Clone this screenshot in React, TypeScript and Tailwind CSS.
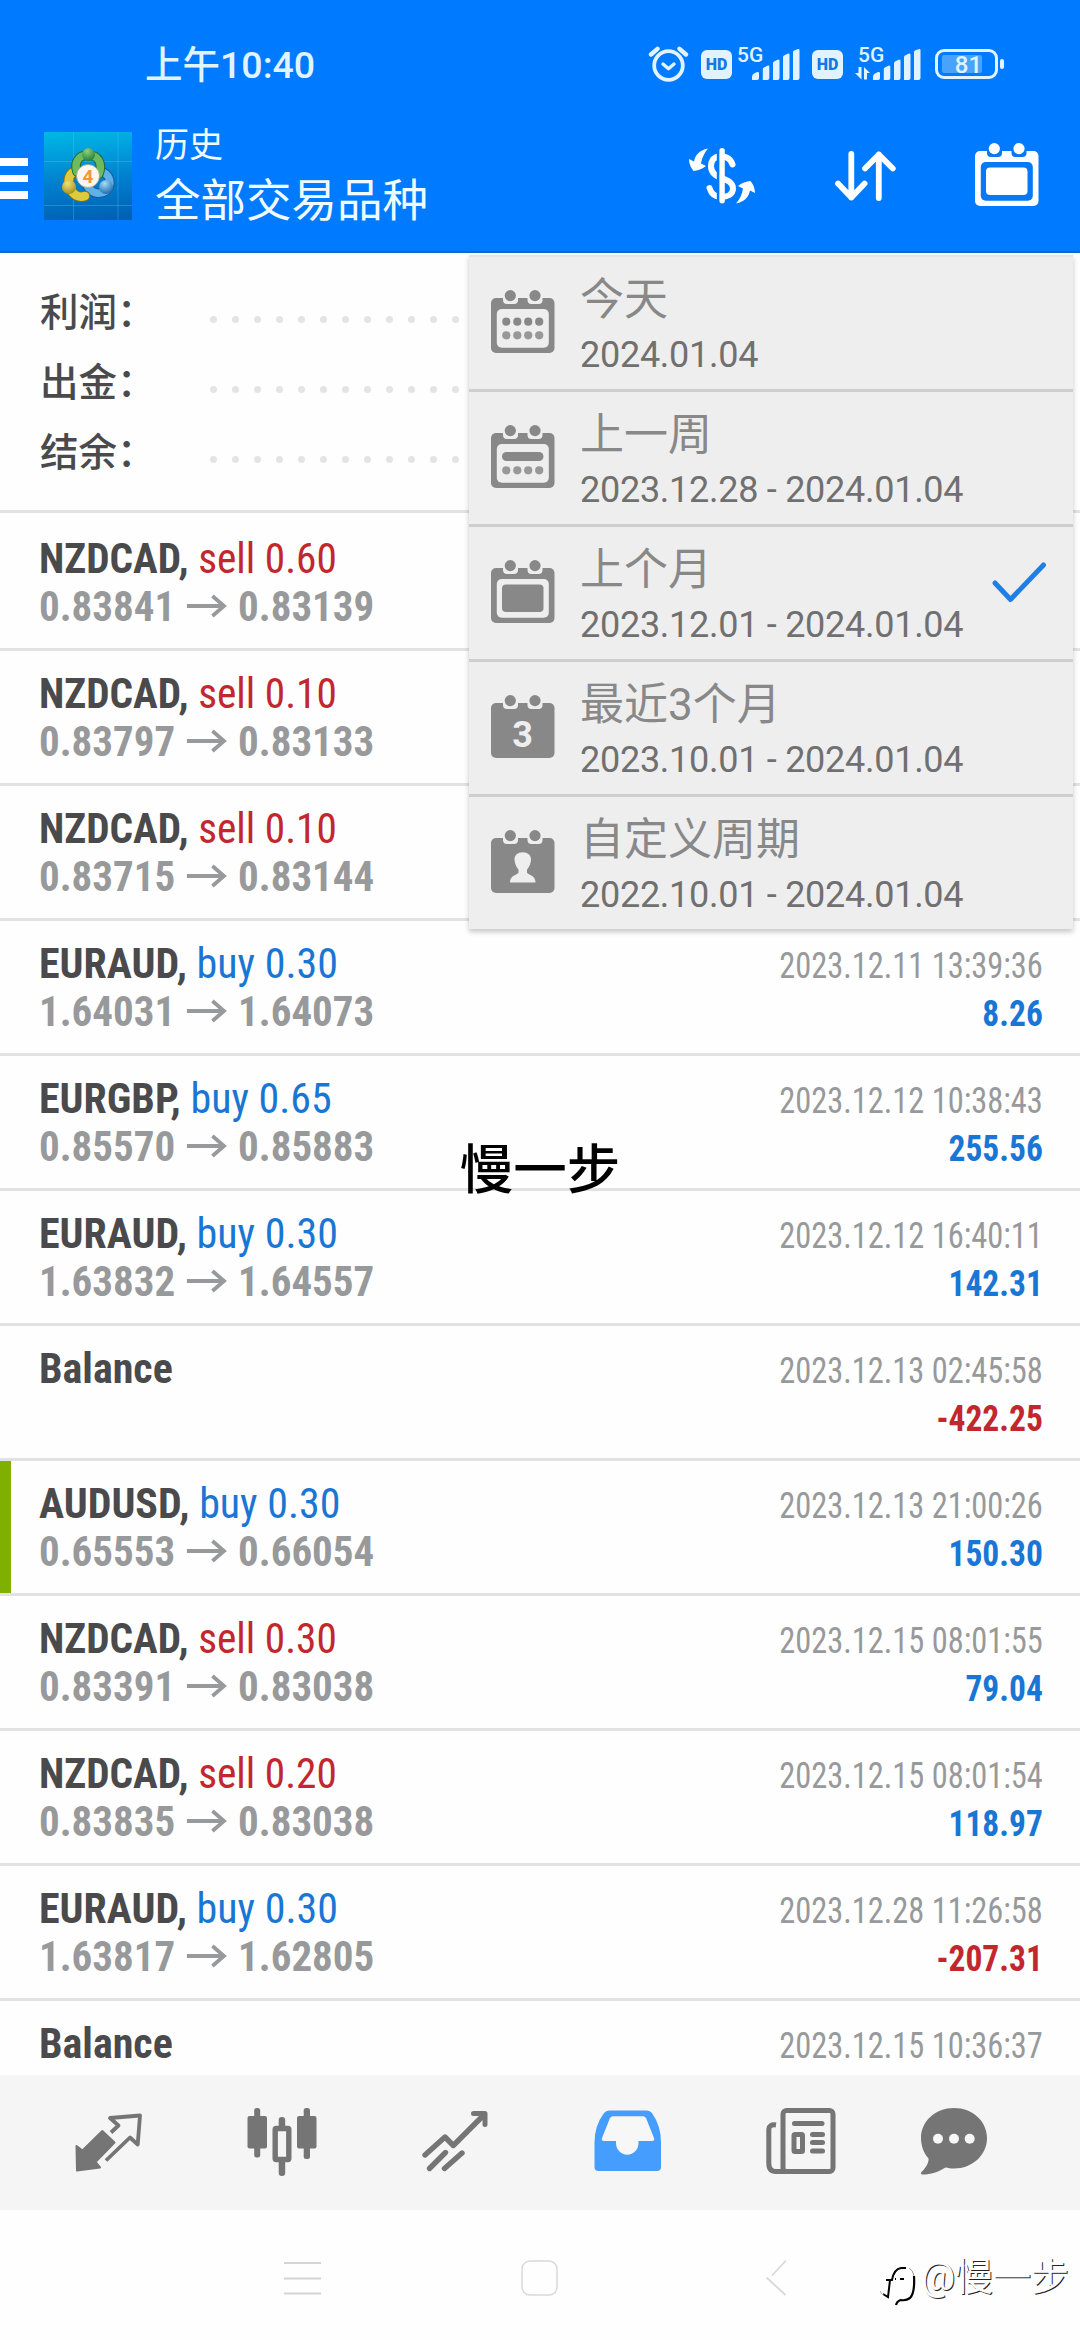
import React from "react";

type Trade = {
  symbol: string;
  side?: "buy" | "sell";
  lots?: string;
  open?: string;
  close?: string;
  time: string;
  profit: string;
  marked?: boolean;
};

const trades: Trade[] = [
  { symbol: "NZDCAD", side: "sell", lots: "0.60", open: "0.83841", close: "0.83139", time: "", profit: "" },
  { symbol: "NZDCAD", side: "sell", lots: "0.10", open: "0.83797", close: "0.83133", time: "", profit: "" },
  { symbol: "NZDCAD", side: "sell", lots: "0.10", open: "0.83715", close: "0.83144", time: "", profit: "" },
  { symbol: "EURAUD", side: "buy", lots: "0.30", open: "1.64031", close: "1.64073", time: "2023.12.11 13:39:36", profit: "8.26" },
  { symbol: "EURGBP", side: "buy", lots: "0.65", open: "0.85570", close: "0.85883", time: "2023.12.12 10:38:43", profit: "255.56" },
  { symbol: "EURAUD", side: "buy", lots: "0.30", open: "1.63832", close: "1.64557", time: "2023.12.12 16:40:11", profit: "142.31" },
  { symbol: "Balance", time: "2023.12.13 02:45:58", profit: "-422.25" },
  { symbol: "AUDUSD", side: "buy", lots: "0.30", open: "0.65553", close: "0.66054", time: "2023.12.13 21:00:26", profit: "150.30", marked: true },
  { symbol: "NZDCAD", side: "sell", lots: "0.30", open: "0.83391", close: "0.83038", time: "2023.12.15 08:01:55", profit: "79.04" },
  { symbol: "NZDCAD", side: "sell", lots: "0.20", open: "0.83835", close: "0.83038", time: "2023.12.15 08:01:54", profit: "118.97" },
  { symbol: "EURAUD", side: "buy", lots: "0.30", open: "1.63817", close: "1.62805", time: "2023.12.28 11:26:58", profit: "-207.31" },
  { symbol: "Balance", time: "2023.12.15 10:36:37", profit: "" },
];

type CalendarKind = "day" | "week" | "month" | "quarter" | "custom";

const periods: { kind: CalendarKind; title: string; range: string; checked?: boolean }[] = [
  { kind: "day", title: "今天", range: "2024.01.04" },
  { kind: "week", title: "上一周", range: "2023.12.28 - 2024.01.04" },
  { kind: "month", title: "上个月", range: "2023.12.01 - 2024.01.04", checked: true },
  { kind: "quarter", title: "最近3个月", range: "2023.10.01 - 2024.01.04" },
  { kind: "custom", title: "自定义周期", range: "2022.10.01 - 2024.01.04" },
];

const dotColumns = [15.3, 26.3, 37.2, 48.2];

const CalendarIcon = ({ kind, color, bg }: { kind: CalendarKind; color: string; bg: string }) => (
  <svg width="64" height="63" viewBox="0 0 64 63" fill={color} className="shrink-0">
    <rect x="0" y="8" width="63.5" height="55" rx="5" />
    <path d="M12 7v3q0 4 4 4h7q4 0 4-4V7zM36.5 7v3q0 4 4 4h7q4 0 4-4V7z" fill={bg} />
    <circle cx="19.3" cy="5.6" r="5.6" />
    <circle cx="44" cy="5.6" r="5.6" />
    {(kind === "day" || kind === "week" || kind === "month") && (
      <rect x="5.8" y="19" width="52" height="38.7" rx="5" fill={bg} />
    )}
    {kind === "day" && dotColumns.map((x) => <circle key={x} cx={x} cy="31.7" r="4.1" />)}
    {kind === "week" && <rect x="11" y="27" width="41.5" height="9" rx="4.5" />}
    {(kind === "day" || kind === "week") &&
      dotColumns.map((x) => <circle key={x} cx={x} cy="45.3" r="4.1" opacity="0.85" />)}
    {kind === "month" && <rect x="11" y="24.5" width="41.5" height="27.5" rx="4" />}
    {kind === "quarter" && (
      <text x="31.7" y="51.5" fontSize="36" fontWeight="700" fontFamily="Roboto, sans-serif" textAnchor="middle" fill={bg}>
        3
      </text>
    )}
    {kind === "custom" && (
      <path
        d="M31.7 22.3c5 0 8.3 3 8.3 7 0 4-1.5 7-4 10.5v3c1.5 2.2 8.5 2.5 8.5 9.7h-25.5c0-7.2 7-7.5 8.5-9.7v-3c-2.5-3.5-4-6.5-4-10.5 0-4 3.2-7 8.2-7z"
        fill={bg}
      />
    )}
  </svg>
);

const SignalBars = () => (
  <svg width="48" height="31" viewBox="0 0 48 31" fill="#e0f3ff">
    <path d="M0 31v-3q0-3 3-4l2-1q2-.5 2 1v5q0 2-2 2z" />
    <path d="M10.8 31V20q0-1 1-1.5l3.5-1.8q2-.5 2 1V29q0 2-2 2z" />
    <path d="M21 31V14q0-1 1-1.5l3.5-1.8q2-.5 2 1V29q0 2-2 2z" />
    <path d="M31 31V8q0-1 1-1.5l3.5-1.8q2-.5 2 1V29q0 2-2 2z" />
    <path d="M41 31V3q0-1 1-1.5L45.5.2q2-.5 2 1V29q0 2-2 2z" />
  </svg>
);

const HdBadge = () => (
  <div className="flex h-[29px] w-[31px] items-center justify-center rounded-[6px] bg-[#e0f3ff] text-[16px] font-black leading-none text-[#1478e6]">
    HD
  </div>
);

const StatusBar = () => (
  <div className="relative h-[112px] text-[#e0f3ff]">
    <div className="absolute left-[145px] top-[40px] text-[37.5px] font-medium leading-[50px]">上午10:40</div>
    <svg className="absolute left-[648px] top-[45px]" width="41" height="38" viewBox="0 0 41 38" fill="none" stroke="#e0f3ff" strokeLinecap="round">
      <circle cx="20.5" cy="20.5" r="14.3" strokeWidth="3.8" />
      <path d="M3 9.5L9.5 3.8M31.5 3.8L38 9.5" strokeWidth="4.4" />
      <path d="M15 19l5.5 4.7L26 19" strokeWidth="3.4" strokeLinejoin="round" />
    </svg>
    <div className="absolute left-[701px] top-[50px]"><HdBadge /></div>
    <div className="absolute left-[737px] top-[43px] text-[21px] font-medium leading-[25px]">5G</div>
    <div className="absolute left-[752px] top-[49px]"><SignalBars /></div>
    <div className="absolute left-[812px] top-[50px]"><HdBadge /></div>
    <div className="absolute left-[858px] top-[43px] text-[21px] font-medium leading-[25px]">5G</div>
    <svg className="absolute left-[855px] top-[67px]" width="16" height="13" viewBox="0 0 16 13" fill="#e0f3ff">
      <path d="M3.5 0h3v12.5L0 6h3.5zM9 12.5V0l6 6h-3v6.5z" />
    </svg>
    <div className="absolute left-[873px] top-[49px]"><SignalBars /></div>
    <div className="absolute left-[935px] top-[49px] h-[30px] w-[63px] rounded-[9px] border-[3px] border-[#e0f3ff]">
      <div className="absolute left-[4px] top-[3px] h-[18px] w-[40px] rounded-[2px] bg-[#4aa3fb]" />
      <div className="absolute inset-0 pl-[4px] text-center text-[24px] font-medium leading-[26px]">81</div>
    </div>
    <div className="absolute left-[1000px] top-[59px] h-[10px] w-[4px] rounded-[2px] bg-[#e0f3ff]" />
  </div>
);

const AppLogo = () => (
  <svg width="88" height="88" viewBox="44 132 88 88" className="shrink-0">
    <defs>
      <linearGradient id="tile" x1="0.5" y1="0" x2="0.6" y2="1">
        <stop offset="0" stopColor="#00b4e4" />
        <stop offset="0.55" stopColor="#007fcf" />
        <stop offset="1" stopColor="#0061b4" />
      </linearGradient>
      <radialGradient id="green" cx="0.4" cy="0.25" r="0.8">
        <stop offset="0" stopColor="#8fd07c" />
        <stop offset="1" stopColor="#1f7a35" />
      </radialGradient>
      <radialGradient id="gold" cx="0.4" cy="0.25" r="0.8">
        <stop offset="0" stopColor="#efe27a" />
        <stop offset="1" stopColor="#a38a14" />
      </radialGradient>
      <radialGradient id="azure" cx="0.4" cy="0.25" r="0.8">
        <stop offset="0" stopColor="#a9dcf8" />
        <stop offset="1" stopColor="#1667ad" />
      </radialGradient>
    </defs>
    <rect x="44" y="132" width="88" height="88" fill="url(#tile)" />
    <path d="M73.5 132v88M118 132v88M44 161.5h88M44 205.5h88" stroke="#5cc3ee" strokeOpacity="0.35" />
    <g fill="none" strokeLinecap="round">
      <path d="M103 172c8 4 9 14 3 19-8 5-17 1-20-8" stroke="#1a5c98" strokeWidth="9.5" />
      <path d="M103 172c8 4 9 14 3 19-8 5-17 1-20-8" stroke="#5db2e8" strokeWidth="7.5" />
      <path d="M77 172c-8-1-10 9-7 16 3 7 9 10 15 8" stroke="#7a711c" strokeWidth="10.5" />
      <path d="M77 172c-8-1-10 9-7 16 3 7 9 10 15 8" stroke="#dccb3f" strokeWidth="8.5" />
      <path d="M77 172c-3-9 1-17 11-17s15 8 11 19" stroke="#226b33" strokeWidth="9.5" />
      <path d="M77 172c-3-9 1-17 11-17s15 8 11 19" stroke="#6dbb5e" strokeWidth="7.5" />
    </g>
    <circle cx="88.5" cy="154.5" r="6.5" fill="url(#green)" />
    <circle cx="69" cy="187" r="7" fill="url(#gold)" />
    <circle cx="106" cy="187" r="7" fill="url(#azure)" />
    <circle cx="88" cy="176" r="11.5" fill="#fbf6ef" stroke="#a99c83" strokeWidth="0.8" />
    <text x="88" y="182.5" fontSize="19" fontWeight="700" fontFamily="Roboto, sans-serif" textAnchor="middle" fill="#f3963a">
      4
    </text>
  </svg>
);

const Header = () => (
  <header className="h-[253px] shrink-0 border-b-2 border-[#1268c4] bg-[#007aff] text-white">
    <StatusBar />
    <div className="flex h-[128px] items-start">
      <div className="mt-[46px] flex w-[28px] flex-col gap-[9px]">
        <div className="h-[7.5px] bg-white" />
        <div className="h-[7.5px] bg-white" />
        <div className="h-[7.5px] bg-white" />
      </div>
      <div className="ml-4 mt-[20px]">
        <AppLogo />
      </div>
      <div className="ml-[23px] mt-[11px] grow text-[#f0fbff]">
        <div className="text-[34px] leading-[44px]">历史</div>
        <div className="mt-[7px] text-[45.5px] leading-[56px]">全部交易品种</div>
      </div>
      <svg className="mt-[35px]" width="68" height="58" viewBox="688 147 68 58" fill="#fff">
        <path
          d="M732.5 164.5C730 157 725 156.5 720 156.5c-7 0-9 5-9 9.8 0 7 5 10 11 12 7 2 11 4.5 11 10.2 0 6-6 8.5-12 8.5-7 0-10-4-11.5-9"
          fill="none"
          stroke="#fff"
          strokeWidth="6"
          strokeLinecap="round"
        />
        <rect x="716.8" y="148" width="3" height="56" fill="#007aff" />
        <rect x="719.4" y="148" width="5.4" height="55.5" rx="2.7" />
        <path d="M708 148.5C699 150 695 156 694 161.5l-5-2.5c0 5 2 9 4.5 12 4-.5 9-2 12.5-5l-5-2.5c1-6 3-10 7-15z" />
        <path d="M708 148.5C699 150 695 156 694 161.5l-5-2.5c0 5 2 9 4.5 12 4-.5 9-2 12.5-5l-5-2.5c1-6 3-10 7-15z" transform="rotate(180 722 176)" />
      </svg>
      <svg
        className="ml-[78px] mt-[38px]"
        width="63"
        height="53"
        viewBox="834 150 63 53"
        fill="none"
        stroke="#fff"
        strokeWidth="5.8"
        strokeLinecap="round"
        strokeLinejoin="round"
      >
        <path d="M851.3 154v43.5M838 183.5l13.3 14 13.3-14M878.8 198v-43.5M865 168.5l13.8-14 14 14" />
      </svg>
      <div className="ml-[78px] mr-[41px] mt-[31px]">
        <CalendarIcon kind="month" color="#ffffff" bg="#0878f4" />
      </div>
    </div>
  </header>
);

const Summary = () => (
  <div className="h-[260px] shrink-0 border-b-[3px] border-[#e2e2e2] pt-[22px]">
    {["利润", "出金", "结余"].map((label) => (
      <div key={label} className="flex h-[70px] items-center pl-[40px] text-[38.5px] font-medium text-[#4a4a4c]">
        <span className="w-[170px] pt-[5px] leading-[70px]">{label}：</span>
        <div className="flex gap-[15px] pt-[19px]">
          {Array.from({ length: 14 }, (_, i) => (
            <div key={i} className="size-[7px] rounded-full bg-[#e4e4e4]" />
          ))}
        </div>
      </div>
    ))}
  </div>
);

const TradeRow = ({ trade }: { trade: Trade }) => (
  <div className="relative flex h-[135px] shrink-0 justify-between whitespace-nowrap border-b-[3px] border-[#e2e2e2] pl-[39px] pr-[37px] font-['Roboto_Condensed','Roboto',sans-serif]">
    {trade.marked && <div className="absolute left-0 top-0 h-full w-[11px] bg-[#7fb000]" />}
    <div className="pt-[18px] text-[43px] leading-[48px]">
      <div className={`origin-left ${trade.side === "sell" ? "scale-x-[0.96]" : "scale-x-[0.976]"}`}>
        <span className="font-bold text-[#4a4a4c]">
          {trade.symbol}
          {trade.side && ","}
        </span>
        {trade.side && (
          <span className={trade.side === "buy" ? "text-[#1a76d4]" : "text-[#c1272d]"}>
            {" "}
            {trade.side} {trade.lots}
          </span>
        )}
      </div>
      {trade.open && (
        <div className="flex origin-left scale-x-[0.953] items-center font-bold text-[#98999b]">
          {trade.open}
          <svg className="ml-[12px] mr-[11px]" width="43" height="24" viewBox="0 0 43 24" fill="none" stroke="#98999b" strokeWidth="4">
            <path d="M0 12h40M27 2l12 10-12 10" />
          </svg>
          {trade.close}
        </div>
      )}
    </div>
    <div className="pt-[21px] text-right text-[36px] leading-[48px]">
      <div className="origin-right scale-x-[0.9] text-[#98999b]">{trade.time}</div>
      <div
        className={`origin-right scale-x-[0.93] font-bold ${trade.profit.startsWith("-") ? "text-[#c1272d]" : "text-[#1a76d4]"}`}
      >
        {trade.profit}
      </div>
    </div>
  </div>
);

const PeriodMenu = () => (
  <div className="absolute left-[469px] top-[255px] w-[604px] border-t-2 border-[#e4e4e4] bg-[#eeeeee] shadow-[0_3px_5px_rgba(0,0,0,0.22)]">
    {periods.map((p, i) => (
      <div
        key={p.kind}
        className={`flex items-start pl-[22px] ${i < periods.length - 1 ? "h-[135px] border-b-[3px] border-[#cecece]" : "h-[132px]"}`}
      >
        <div className="mt-[33px]">
          <CalendarIcon kind={p.kind} color="#888888" bg="#eeeeee" />
        </div>
        <div className="ml-[25px] grow pt-[15px]">
          <div className="mb-[3px] text-[44px] leading-[56px] text-[#888888]">{p.title}</div>
          <div className="text-[36px] leading-[48px] tracking-[-0.27px] text-[#707070]">{p.range}</div>
        </div>
        {p.checked && (
          <svg className="mr-[26px] mt-[34px]" width="56" height="42" viewBox="0 0 56 42" fill="none" stroke="#1f7fe5" strokeWidth="5" strokeLinecap="round" strokeLinejoin="round">
            <path d="M4 22l15.5 16.5L52.5 4" />
          </svg>
        )}
      </div>
    ))}
  </div>
);

const TabBar = () => (
  <nav className="flex h-[135px] shrink-0 items-center bg-[#f5f5f5] pl-[22px]">
    <div className="flex w-[173px] justify-center">
      <svg width="70" height="70" viewBox="74 2108 70 70" fill="#757575" stroke="#757575" strokeLinejoin="round">
        <path d="M76.5 2146l6 4.5 19.8-19.5 12.2 11.5-19 19.5 4.5 5.5-23 3z" strokeWidth="2" />
        <path d="M111 2132.5l7.5-7-8.5-7.5 30-2.5-2.3 29-7.7-7-24 23" fill="none" strokeWidth="3.8" />
      </svg>
    </div>
    <div className="flex w-[173px] justify-center">
      <svg width="70" height="70" viewBox="246 2108 70 70" fill="#757575">
        <rect x="246.5" y="2116" width="19.5" height="32.5" rx="2" />
        <rect x="253.2" y="2108" width="6" height="49.5" rx="2.5" />
        <rect x="296" y="2116" width="19.5" height="32.5" rx="2" />
        <rect x="302.7" y="2108" width="6.3" height="51" rx="2.5" />
        <rect x="277.7" y="2117" width="6.5" height="12" rx="3" />
        <rect x="277.7" y="2160" width="6.5" height="16" rx="3" />
        <rect x="274.2" y="2128.5" width="13.6" height="31" rx="1" fill="#f5f5f5" stroke="#757575" strokeWidth="5.4" />
      </svg>
    </div>
    <div className="flex w-[173px] justify-center">
      <svg width="70" height="70" viewBox="419 2108 70 70" fill="none" stroke="#757575" strokeWidth="5.4" strokeLinecap="round" strokeLinejoin="round">
        <path d="M424 2155l20-18 8.3 8.5 31-31" />
        <path d="M472.5 2113.5H484v11" strokeWidth="5" />
        <path d="M428.5 2168.5l16-16M443.5 2168.5l17.5-15.5" />
      </svg>
    </div>
    <div className="flex w-[173px] justify-center">
      <svg width="70" height="70" viewBox="593 2108 70 70">
        <path d="M604 2113q2-2.5 5-2.5h38q3 0 5 2.5 9 13 9 29v25q0 4-4 4h-58.5q-4 0-4-4v-25q0-16 9.5-29z" fill="#459efd" />
        <path d="M610 2118q1-1.8 3-1.8h30q2 0 3 1.8l8 20q1 3-2 3h-13.5v2a11.2 11.7 0 0 1-22.5 0v-2H604q-3 0-2-3z" fill="#f7f7f7" />
      </svg>
    </div>
    <div className="flex w-[173px] justify-center">
      <svg width="70" height="70" viewBox="766 2108 70 70" fill="none" stroke="#757575" strokeWidth="5" strokeLinejoin="round">
        <rect x="783" y="2110.5" width="50" height="61" rx="3.5" />
        <path d="M776 2125q-7.2-1-7.2 5v33q0 8.5 7 8.5h10" />
        <g fill="#757575" stroke="none">
          <rect x="792" y="2121" width="32.5" height="5" rx="2.5" />
          <rect x="810" y="2132" width="15" height="5" rx="2.5" />
          <rect x="810" y="2140" width="15" height="5" rx="2.5" />
          <rect x="810" y="2148.5" width="15" height="5" rx="2.5" />
        </g>
        <rect x="794" y="2134.5" width="8.5" height="17" rx="1" />
      </svg>
    </div>
    <div className="flex w-[133px] justify-center">
      <svg width="70" height="70" viewBox="918 2108 70 70" fill="#757575">
        <path d="M953 2108c18.5 0 33 13 33 30s-14.5 30.5-33 30.5c-3 0-6-.5-8.5-1-7 4.5-15 7-22.5 7-2.5 0-2.5-1.5-1-3 5-5 7-10 6.5-13-5-5.500-7.500-13-7.500-20.500 0-17 14.500-30 33-30z" />
        <g fill="#f7f7f7">
          <circle cx="937" cy="2138.7" r="5" />
          <circle cx="953" cy="2138.7" r="5" />
          <circle cx="968.7" cy="2138.7" r="5" />
        </g>
      </svg>
    </div>
  </nav>
);

const SystemNav = () => (
  <div className="relative flex h-[130px] shrink-0 items-start bg-[#fefefe] pl-[284px] pt-[48px]">
    <svg width="38" height="40" viewBox="0 0 38 40" stroke="#d4d4d4" strokeWidth="2">
      <path d="M0 5h37M0 20.5h37M0 35.5h37" />
    </svg>
    <svg className="ml-[197px]" width="42" height="40" viewBox="0 0 42 40" fill="none">
      <rect x="3" y="3" width="35" height="34" rx="8" stroke="#d9d9d9" strokeWidth="1.5" />
    </svg>
    <svg className="ml-[204px]" width="24" height="40" viewBox="0 0 24 40" fill="none" stroke="#d9d9d9" strokeWidth="1.8">
      <path d="M21 2.5L7 17.5M1.5 19.5L20.5 37" />
    </svg>
    {/* author signature */}
    <div className="absolute left-[880px] top-[41px] flex items-start whitespace-nowrap">
      <svg className="mt-[15px]" width="38" height="40" viewBox="0 0 38 40" fill="none" stroke="#000">
        <path d="M3 28l5 3 2-17M6 14h6q2-11 9-12h5" strokeWidth="2" />
        <path d="M0 25q1 3 4 4.500" stroke="#aaa" />
        <path d="M15 13h1M20 13h4M34 10q1 17-4 22-4 3-9 2-4 1-5 5" strokeWidth="2.2" />
        <path d="M29 2q4 2 5 8" strokeWidth="1" stroke="#999" />
      </svg>
      <div className="ml-[3px] text-[38px] leading-[52px] text-white [text-shadow:1px_1px_0_#222]">@慢一步</div>
    </div>
  </div>
);

const App = () => {
  return (
    <div className="relative flex h-[2340px] w-[1080px] flex-col overflow-hidden bg-white font-['Roboto','Noto_Sans_CJK_SC',sans-serif]">
      <Header />
      <div className="flex h-[1822px] shrink-0 flex-col overflow-hidden bg-[#fefefe]">
        <Summary />
        <div className="pt-[3px]">
          {trades.map((trade, i) => (
            <TradeRow key={i} trade={trade} />
          ))}
        </div>
      </div>
      <TabBar />
      <SystemNav />

      <PeriodMenu />

      {/* name overlay in the middle of the screen */}
      <div className="absolute inset-x-0 top-[1136px] text-center text-[53.5px] font-medium leading-[70px] text-black">慢一步</div>
    </div>
  );
};

export default App;
